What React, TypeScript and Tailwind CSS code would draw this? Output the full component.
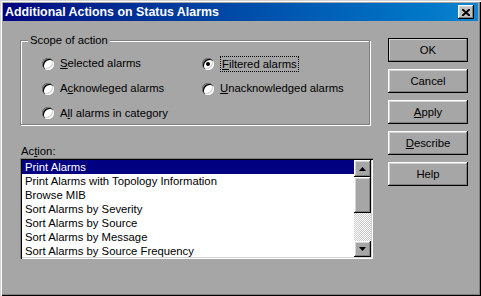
import React from 'react';

const raised =
    'shadow-[inset_-1px_-1px_0_#000,inset_1px_1px_0_#fff,inset_-2px_-2px_0_#808080,inset_2px_2px_0_#d4d4d4]';

const actions = [
    'Print Alarms',
    'Print Alarms with Topology Information',
    'Browse MIB',
    'Sort Alarms by Severity',
    'Sort Alarms by Source',
    'Sort Alarms by Message',
    'Sort Alarms by Source Frequency',
];

function Radio({ checked, children }: { checked?: boolean; children: React.ReactNode }) {
    return (
        <div className="flex items-center gap-[6px]">
            <span className="relative w-[12px] h-[12px] rounded-full bg-white shadow-[inset_1px_1px_0_#808080,inset_2px_2px_0_#000,inset_-1px_-1px_0_#fff,inset_-2px_-2px_0_#d4d4d4] flex items-center justify-center">
                {checked && <span className="w-[4px] h-[4px] rounded-full bg-black" />}
            </span>
            {children}
        </div>
    );
}

function Btn({ children, def }: { children: React.ReactNode; def?: boolean }) {
    return (
        <div
            className={`w-[80px] h-[24px] flex items-center justify-center ${raised} ${
                def ? 'outline outline-1 outline-black -outline-offset-1' : ''
            }`}
        >
            {children}
        </div>
    );
}

function Arrow({ up }: { up?: boolean }) {
    return (
        <svg width="7" height="4" viewBox="0 0 7 4">
            <path d={up ? 'M3.5 0 L7 4 L0 4 Z' : 'M0 0 L7 0 L3.5 4 Z'} fill="#000" />
        </svg>
    );
}

export default function App() {
    return (
        <div className="w-[481px] h-[296px] bg-[#a6a6a6] p-[3px] flex flex-col font-['Liberation_Sans',Arial,sans-serif] text-[11.3px] text-black shadow-[inset_1px_1px_0_#d4d4d4,inset_2px_2px_0_#fff,inset_-1px_-1px_0_#000,inset_-2px_-2px_0_#808080]">
            {/* Title bar */}
            <div className="h-[18px] flex items-center justify-between bg-gradient-to-r from-[#000080] to-[#1084d0]">
                <span className="pl-[2px] text-white font-bold text-[12.4px] leading-none">
                    Additional Actions on Status Alarms
                </span>
                <div className={`w-[16px] h-[14px] mr-[4px] bg-[#c0c0c0] flex items-center justify-center ${raised}`}>
                    <svg width="8" height="7" viewBox="0 0 8 7">
                        <path d="M0 0 L8 7 M8 0 L0 7" stroke="#000" strokeWidth="2" />
                    </svg>
                </div>
            </div>

            <div className="flex flex-1 pt-[17px] pl-[17px]">
                {/* Left column */}
                <div className="w-[353px] flex flex-col">
                    <div className="relative mt-[2px] w-[350px] h-[85px] border border-[#808080] shadow-[inset_1px_1px_0_#fff,1px_1px_0_#fff]">
                        <span className="absolute -top-[8px] left-[7px] px-[2px] bg-[#a6a6a6] leading-[14px]">
                            Scope of action
                        </span>
                        <div className="grid grid-cols-[160px_1fr] pl-[21px] pt-[10px]">
                            <div className="h-[25px] flex items-center">
                                <Radio>
                                    <span><u>S</u>elected alarms</span>
                                </Radio>
                            </div>
                            <div className="h-[25px] flex items-center">
                                <Radio checked>
                                    <span className="border border-dotted border-black px-[1px] leading-[14px]">
                                        <u>F</u>iltered alarms
                                    </span>
                                </Radio>
                            </div>
                            <div className="h-[25px] flex items-center">
                                <Radio>
                                    <span>A<u>c</u>knowleged alarms</span>
                                </Radio>
                            </div>
                            <div className="h-[25px] flex items-center">
                                <Radio>
                                    <span><u>U</u>nacknowledged alarms</span>
                                </Radio>
                            </div>
                            <div className="h-[24px] flex items-center">
                                <Radio>
                                    <span>A<u>l</u>l alarms in category</span>
                                </Radio>
                            </div>
                        </div>
                    </div>

                    <div className="mt-[20px] h-[13px] leading-[13px] pl-[1px]">
                        Ac<u>t</u>ion:
                    </div>

                    {/* Listbox */}
                    <div className="w-[353px] h-[101px] p-[2px] bg-white flex shadow-[inset_1px_1px_0_#808080,inset_2px_2px_0_#000,inset_-1px_-1px_0_#fff,inset_-2px_-2px_0_#d4d4d4]">
                        <div className="flex-1 overflow-hidden">
                            {actions.map((a, i) => (
                                <div
                                    key={a}
                                    className={`h-[14px] leading-[14px] pl-[3px] whitespace-nowrap ${
                                        i === 0 ? 'bg-[#000080] text-white' : ''
                                    }`}
                                >
                                    {a}
                                </div>
                            ))}
                        </div>
                        <div className="w-[17px] flex flex-col">
                            <div className={`h-[17px] bg-[#a6a6a6] flex items-center justify-center ${raised}`}>
                                <Arrow up />
                            </div>
                            <div className={`h-[36px] bg-[#a6a6a6] ${raised}`} />
                            <div className="flex-1 bg-[repeating-conic-gradient(#fff_0_25%,#c8c8c8_0_50%)] bg-[length:2px_2px]" />
                            <div className={`h-[16px] bg-[#a6a6a6] flex items-center justify-center ${raised}`}>
                                <Arrow />
                            </div>
                        </div>
                    </div>
                </div>

                {/* Right column */}
                <div className="ml-[15px] flex flex-col gap-[7px]">
                    <Btn def>OK</Btn>
                    <Btn>Cancel</Btn>
                    <Btn><span><u>A</u>pply</span></Btn>
                    <Btn><span><u>D</u>escribe</span></Btn>
                    <Btn>Help</Btn>
                </div>
            </div>
        </div>
    );
}
